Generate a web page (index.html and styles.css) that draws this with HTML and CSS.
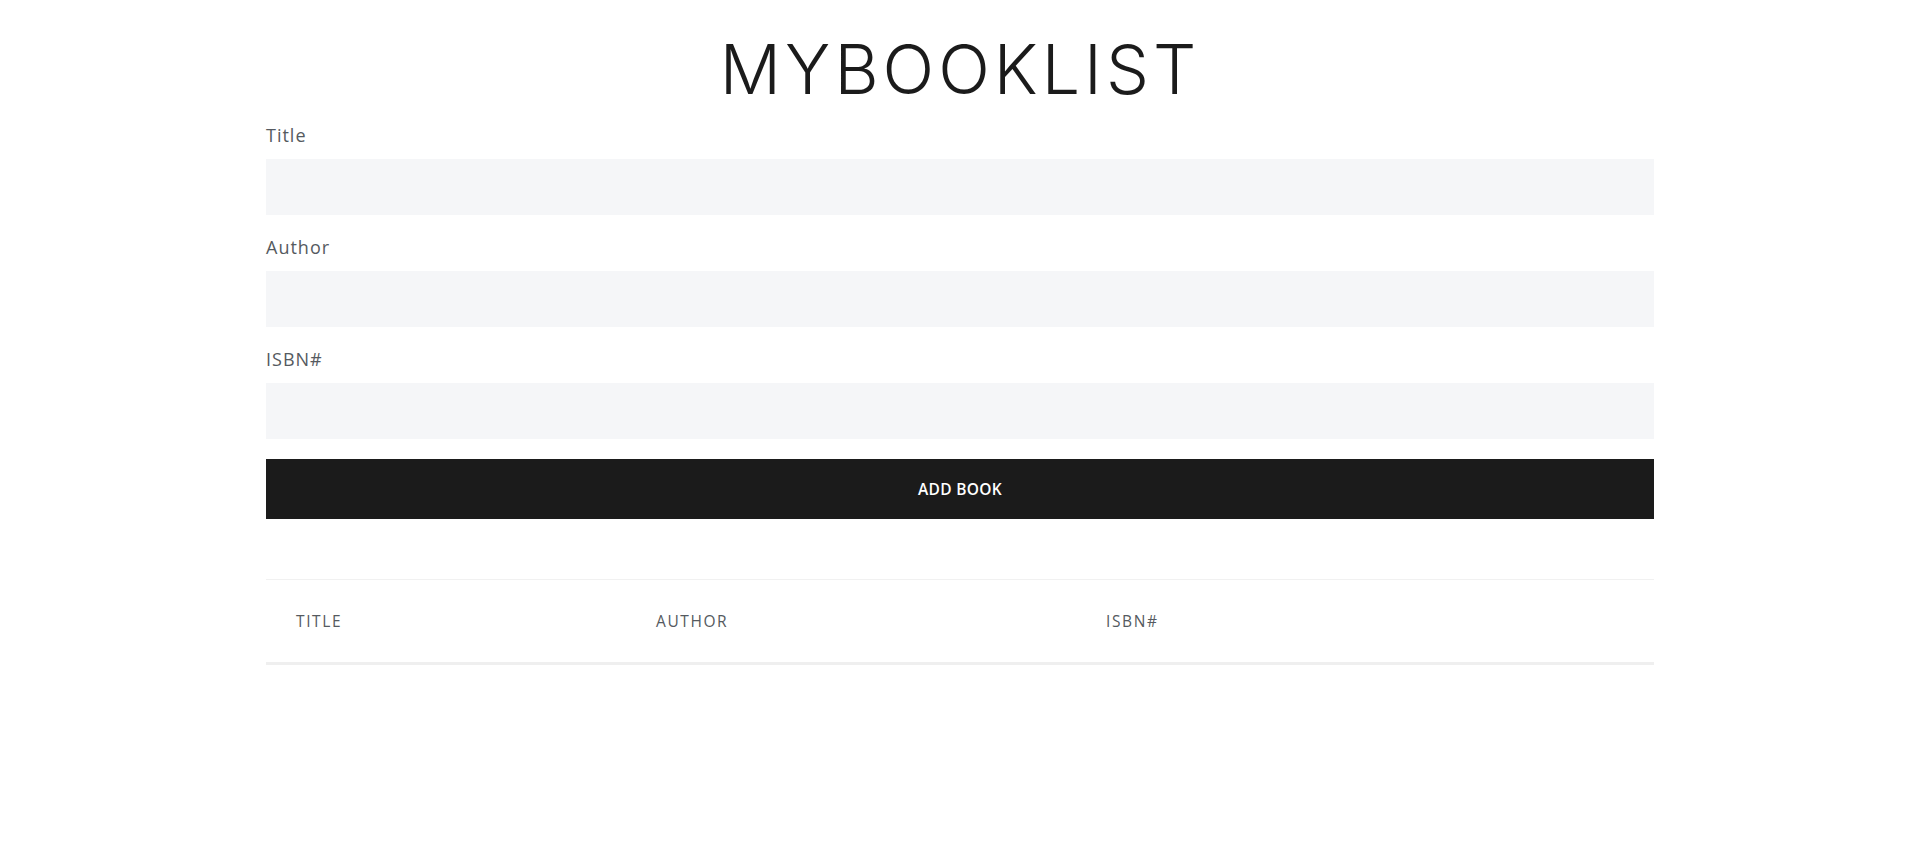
FILE: index.html
```html
<!DOCTYPE html>
<html lang="en">
<head>
<meta charset="utf-8">
<title>MyBookList</title>
<link rel="stylesheet" href="styles.css">
</head>
<body>
<div class="container">
  <h1 class="brand">MYBOOKLIST</h1>
  <form class="book-form">
    <div class="form-group">
      <label class="field-label" for="title">Title</label>
      <input class="field-input" id="title" type="text">
    </div>
    <div class="form-group">
      <label class="field-label" for="author">Author</label>
      <input class="field-input" id="author" type="text">
    </div>
    <div class="form-group">
      <label class="field-label" for="isbn">ISBN#</label>
      <input class="field-input" id="isbn" type="text">
    </div>
    <button class="submit-btn" type="button">ADD BOOK</button>
  </form>
  <table class="book-table">
    <thead>
      <tr>
        <th class="col-title">TITLE</th>
        <th class="col-author">AUTHOR</th>
        <th class="col-isbn">ISBN#</th>
      </tr>
    </thead>
    <tbody></tbody>
  </table>
</div>
</body>
</html>
```

FILE: styles.css
```css
* { box-sizing: border-box; }
html, body { margin: 0; padding: 0; background: #fff; }
body { font-family: "Open Sans", "Liberation Sans", sans-serif; color: #1b1b1b; }

.container {
  max-width: 1388px;
  margin: 0 auto;
}

.brand {
  margin: 0 0 14px;
  padding-top: 29px;
  font-family: Inter, "Noto Sans", sans-serif;
  font-weight: 300;
  font-size: 68px;
  line-height: 80px;
  letter-spacing: 4px;
  text-align: center;
  color: #1b1b1b;
}

.book-form { display: flex; flex-direction: column; }

.form-group {
  display: flex;
  flex-direction: column;
  margin-bottom: 20px;
}

.field-label {
  font-size: 18px;
  line-height: 24px;
  letter-spacing: 1px;
  color: #555a60;
  margin-bottom: 12px;
}

.field-input {
  height: 56px;
  border: 0;
  border-radius: 0;
  background: #f5f6f8;
  outline: none;
  padding: 0 16px;
  font-size: 16px;
}

.submit-btn {
  height: 60px;
  border: 0;
  border-radius: 0;
  background: #1b1b1b;
  color: #fff;
  font-family: "Open Sans", sans-serif;
  font-weight: 600;
  font-size: 15.5px;
  letter-spacing: 0.3px;
  cursor: pointer;
}

.book-table {
  width: 100%;
  margin-top: 60px;
  border-collapse: collapse;
  border-top: 1px solid #f1f1f1;
}

.book-table th {
  text-align: left;
  padding: 30px;
  line-height: 22px;
  font-size: 15.5px;
  font-weight: 400;
  letter-spacing: 1.6px;
  color: #555a60;
  border-bottom: 3px solid #efefef;
}

.col-title { width: 360px; }
.col-author { width: 450px; }
```
